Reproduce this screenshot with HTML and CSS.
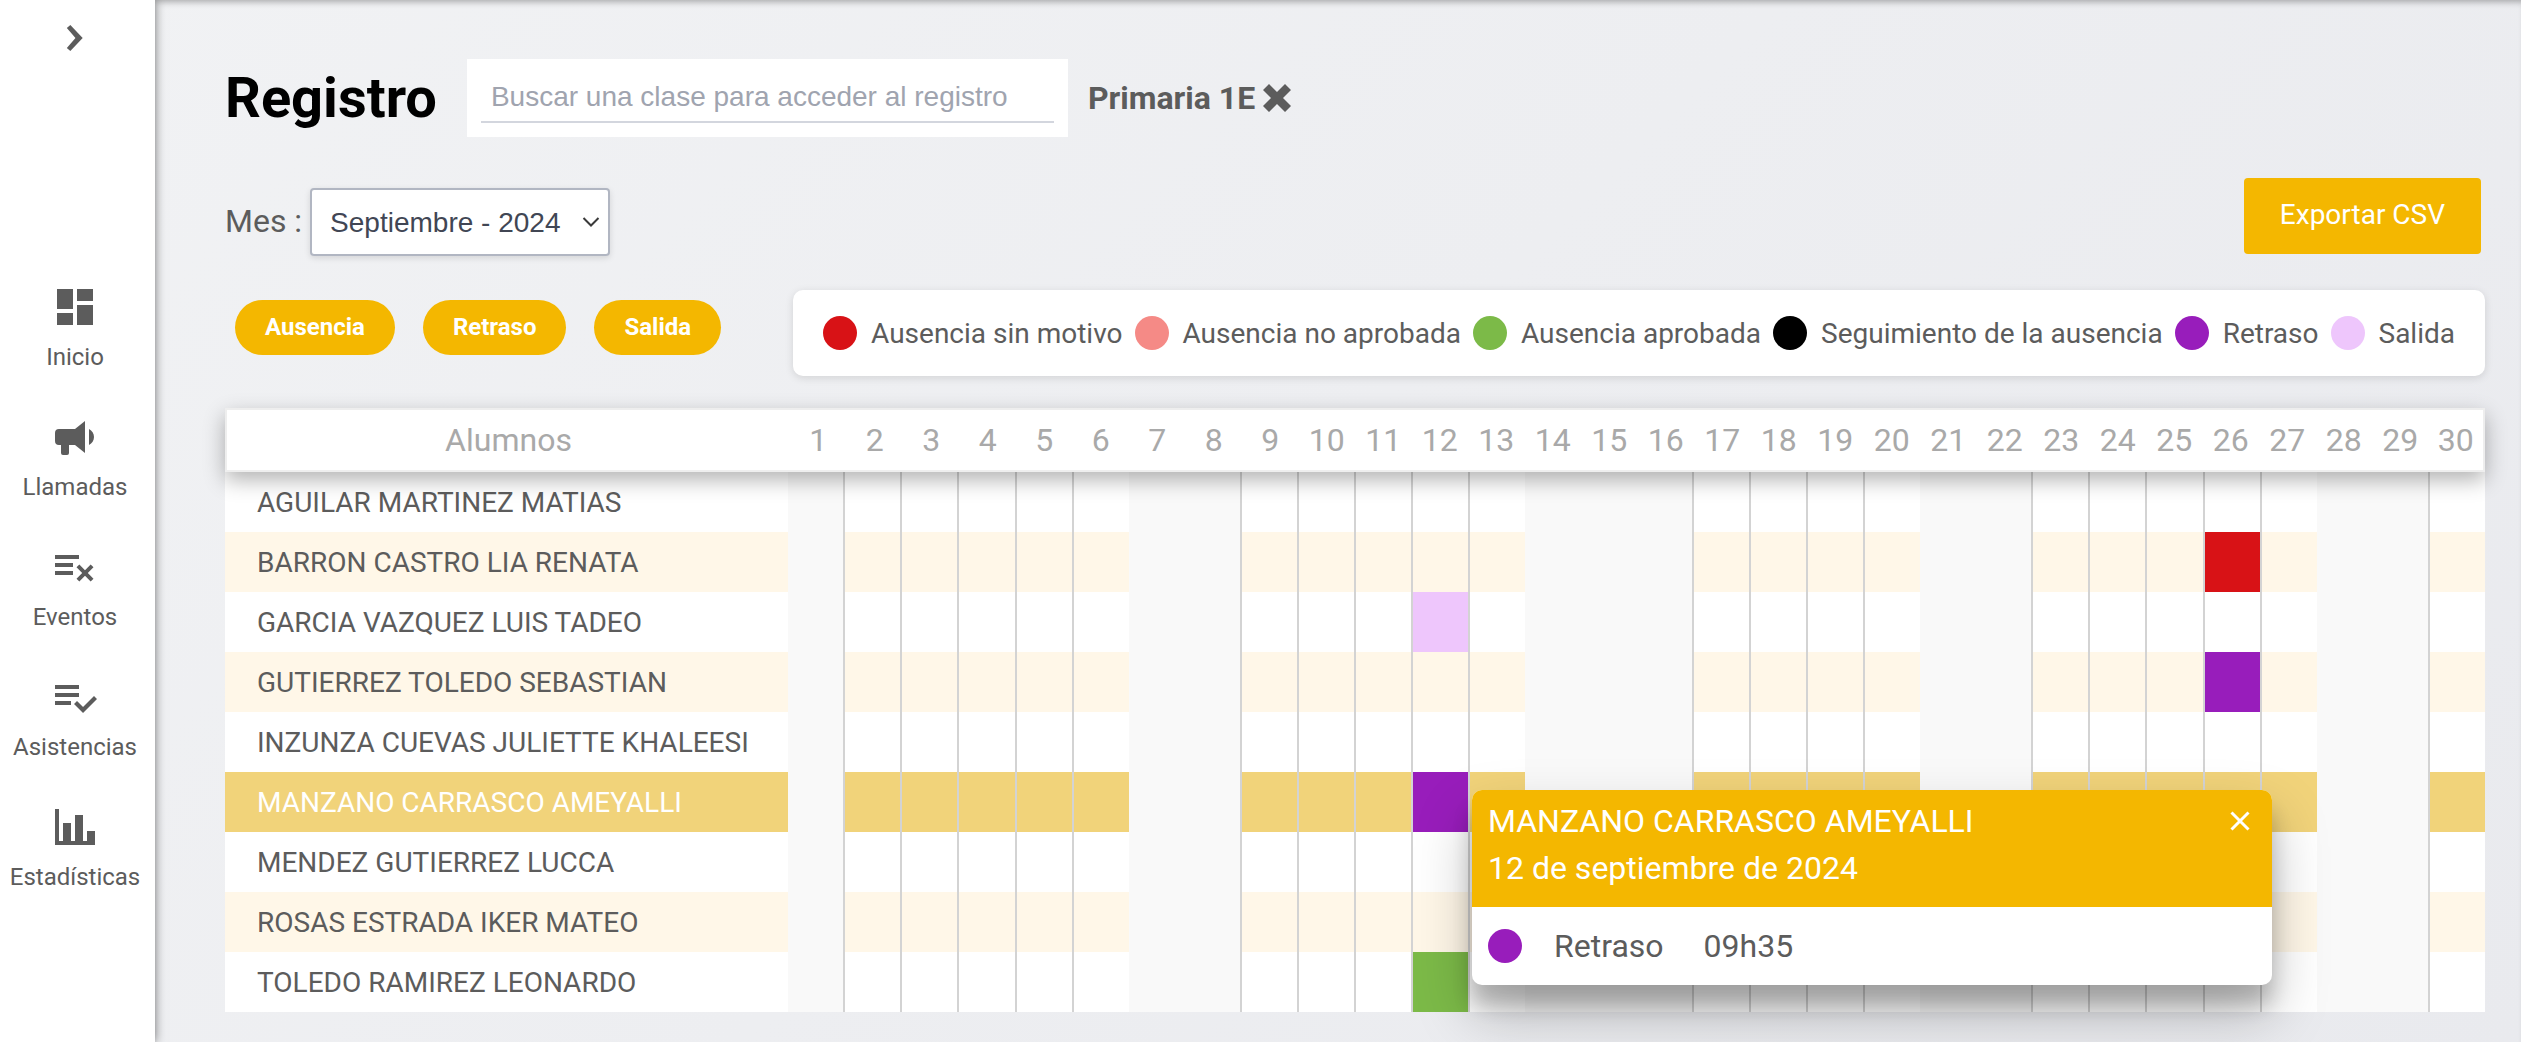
FILE: index.html
```html
<!DOCTYPE html>
<html lang="es">
<head>
  <meta charset="UTF-8">
  <meta name="viewport" content="width=device-width, initial-scale=1.0">
  <title>Registro</title>
  <link rel="stylesheet" href="styles.css">
</head>
<body>
  <nav class="sidebar">
    <button class="sidebar-toggle" type="button" aria-label="Abrir menú">
      <svg viewBox="0 0 24 24"><path d="M5 3.400 12.400 12 5 20.600 8 23.200 18.600 12 8 .8z"/></svg>
    </button>
    <ul class="menu">
      <li><a class="menu-item" href="#">
        <svg viewBox="0 0 24 24"><path d="M3 13h8V3H3v10zm0 8h8v-6H3v6zm10 0h8V11h-8v10zm0-18v6h8V3h-8z"/></svg>
        <span>Inicio</span>
      </a></li>
      <li><a class="menu-item" href="#">
        <svg viewBox="0 0 24 24"><path d="M12 8H4a2 2 0 0 0-2 2v4a2 2 0 0 0 2 2h1v4a1 1 0 0 0 1 1h2a1 1 0 0 0 1-1v-4h3l5 4V4l-5 4m9.500 4c0 1.710-.960 3.260-2.500 4V8c1.530.750 2.500 2.300 2.500 4z"/></svg>
        <span>Llamadas</span>
      </a></li>
      <li><a class="menu-item" href="#">
        <svg viewBox="0 0 24 24"><path d="M2 6v2h12V6H2m0 4v2h9v-2H2m12.170.760-1.410 1.410L15.590 15l-2.830 2.830 1.410 1.410L17 16.410l2.830 2.830 1.410-1.410L18.410 15l2.830-2.830-1.410-1.410L17 13.590l-2.830-2.830M2 14v2h9v-2H2z"/></svg>
        <span>Eventos</span>
      </a></li>
      <li><a class="menu-item" href="#">
        <svg viewBox="0 0 24 24"><path d="M14 10H2v2h12v-2m0-4H2v2h12V6M2 16h8v-2H2v2m19.500-4.500L23 13l-6.990 7-4.510-4.500L13 14l3.010 3 5.490-5.500z"/></svg>
        <span>Asistencias</span>
      </a></li>
      <li><a class="menu-item" href="#">
        <svg viewBox="0 0 24 24"><path d="M22 21H2V3h2v16h2v-9h4v9h2V6h4v13h2v-5h4v7z"/></svg>
        <span>Estadísticas</span>
      </a></li>
    </ul>
  </nav>

  <main class="content">
    <header class="title-bar">
      <h1>Registro</h1>
      <div class="search">
        <input type="text" placeholder="Buscar una clase para acceder al registro" aria-label="Buscar una clase">
      </div>
      <div class="class-tag">
        <span>Primaria 1E</span>
        <button type="button" aria-label="Quitar clase">
          <svg viewBox="0 0 28 28"><path d="M6 0 14 8 22 0 28 6 20 14 28 22 22 28 14 20 6 28 0 22 8 14 0 6z"/></svg>
        </button>
      </div>
    </header>

    <div class="toolbar">
      <div class="month">
        <label for="month">Mes :</label>
        <div class="select-wrap">
          <select id="month">
            <option>Septiembre - 2024</option>
          </select>
          <svg viewBox="0 0 18 12"><path d="M1.500 2 9 9.500 16.500 2"/></svg>
        </div>
      </div>
      <button class="export" type="button">Exportar CSV</button>
    </div>

    <div class="filters">
      <div class="pills">
        <button class="pill" type="button">Ausencia</button>
        <button class="pill" type="button">Retraso</button>
        <button class="pill" type="button">Salida</button>
      </div>
      <ul class="legend">
        <li><span class="dot unjustified"></span>Ausencia sin motivo</li>
        <li><span class="dot rejected"></span>Ausencia no aprobada</li>
        <li><span class="dot approved"></span>Ausencia aprobada</li>
        <li><span class="dot tracking"></span>Seguimiento de la ausencia</li>
        <li><span class="dot late"></span>Retraso</li>
        <li><span class="dot exit"></span>Salida</li>
      </ul>
    </div>

    <div class="register">
      <table>
        <thead>
          <tr id="days"></tr>
        </thead>
        <tbody id="students"></tbody>
      </table>
      <div class="popup" role="dialog" aria-labelledby="popupName">
        <div class="popup-header">
          <div>
            <div id="popupName">MANZANO CARRASCO AMEYALLI</div>
            <div>12 de septiembre de 2024</div>
          </div>
          <button type="button" aria-label="Cerrar">
            <svg viewBox="0 0 20 20"><path d="M1.500 1.500l17 17M18.500 1.500l-17 17"/></svg>
          </button>
        </div>
        <div class="popup-body">
          <span class="dot late"></span>
          <span>Retraso</span>
          <span>09h35</span>
        </div>
      </div>
    </div>
  </main>
  <script src="register.js"></script>
</body>
</html>
```
FILE: styles.css
```css
* {
  box-sizing: border-box;
}
body {
  margin: 0;
  display: flex;
  min-height: 100vh;
  font-family: Roboto, sans-serif;
  font-size: 28px;
  color: #5c5c5c;
  background: linear-gradient(135deg, #f1f2f4, #e9eaee);
}
button {
  border: none;
  font-family: inherit;
  font-size: inherit;
  cursor: pointer;
}
input, select {
  font-family: "Liberation Sans", Arial, sans-serif;
  font-size: 28px;
}
ul {
  list-style: none;
  margin: 0;
  padding: 0;
}
svg {
  display: block;
  fill: currentColor;
}

/* sidebar */
.sidebar {
  flex: none;
  width: 155px;
  padding-right: 5px;
  background: #fff;
  box-shadow: 0 0 10px rgba(0,0,0,0.5);
  z-index: 1;
}
.sidebar-toggle {
  display: block;
  margin: 24px auto 0;
  padding: 0;
  background: none;
  color: #5c5c5c;
}
.sidebar-toggle svg {
  width: 28px;
  height: 28px;
}
.menu {
  margin-top: 231px;
}
.menu-item {
  display: flex;
  flex-direction: column;
  align-items: center;
  height: 130px;
  font-size: 24px;
  line-height: 28px;
  color: #5c5c5c;
  text-decoration: none;
}
.menu-item svg {
  width: 48px;
  height: 48px;
  margin-bottom: 12px;
}

/* content */
.content {
  flex: 1;
  min-width: 0;
  padding: 59px 36px 30px 70px;
  box-shadow: inset 0 6px 6px -4px rgba(0,0,0,0.3);
}
.title-bar {
  display: flex;
  align-items: center;
}
h1 {
  margin: 0 30px 0 0;
  font-size: 56px;
  line-height: 64px;
  font-weight: 700;
  color: #000;
}
.search {
  width: 601px;
  height: 78px;
  padding: 12px 14px;
  background: #fff;
}
.search input {
  width: 100%;
  height: 52px;
  padding: 2px 10px 0;
  border: none;
  border-bottom: 2px solid #d3d6de;
  background: none;
  color: #5c5c5c;
}
.search input::placeholder {
  color: #a0a4af;
}
.class-tag {
  display: flex;
  align-items: center;
  gap: 8px;
  margin-left: 20px;
  font-size: 32px;
  font-weight: 700;
}
.class-tag button {
  padding: 0;
  background: none;
  color: #5c5c5c;
}
.class-tag svg {
  width: 28px;
  height: 28px;
}
.toolbar {
  display: flex;
  justify-content: space-between;
  align-items: flex-start;
  margin-top: 41px;
  padding-right: 4px;
}
.month {
  display: flex;
  align-items: center;
  gap: 8px;
  margin-top: 10px;
  font-size: 32px;
}
.month label {
  padding-bottom: 2px;
}
.select-wrap {
  position: relative;
}
.select-wrap select {
  appearance: none;
  display: block;
  width: 300px;
  height: 68px;
  padding: 0 36px 0 18px;
  border: 2px solid #b1b6c2;
  border-radius: 4px;
  background: #fff;
  color: #414654;
  box-shadow: 0 2px 6px rgba(0,0,0,0.12);
}
.select-wrap svg {
  position: absolute;
  right: 10px;
  top: 28px;
  width: 18px;
  height: 12px;
  fill: none;
  stroke: #3a3a3a;
  stroke-width: 2;
  pointer-events: none;
}
.export {
  height: 76px;
  padding: 0 36px 4px;
  border-radius: 4px;
  background: #f4b700;
  color: #fff;
}

/* filters and legend */
.filters {
  display: flex;
  justify-content: space-between;
  align-items: flex-start;
  margin-top: 34px;
}
.pills {
  display: flex;
  gap: 28px;
  padding: 10px;
}
.pill {
  height: 55px;
  padding: 0 30px 2px;
  border-radius: 28px;
  background: #f4b700;
  color: #fff;
  font-size: 24px;
  font-weight: 700;
}
.legend {
  display: flex;
  align-items: center;
  gap: 12px;
  height: 86px;
  padding: 0 30px;
  border-radius: 10px;
  background: #fff;
  box-shadow: 0 2px 8px rgba(0,0,0,0.12);
}
.legend li {
  display: flex;
  align-items: center;
  gap: 14px;
}
.dot {
  width: 34px;
  height: 34px;
  border-radius: 50%;
}
.unjustified {
  background: #d81216;
}
.rejected {
  background: #f58a86;
}
.approved {
  background: #7cba48;
}
.tracking {
  background: #000;
}
.late {
  background: #981dbb;
}
.exit {
  background: #eec6fc;
}

/* register */
.register {
  position: relative;
  margin-top: 32px;
}
table {
  display: block;
}
/* the head keeps equal day columns, the body makes days off narrower */
thead, tbody {
  display: table;
  width: 100%;
  table-layout: fixed;
  border-spacing: 0;
}
th, td {
  padding: 0;
}
thead {
  position: relative;
  box-shadow: 0 8px 20px rgba(0,0,0,0.3);
}
thead th {
  height: 64px;
  border: solid #eee;
  border-width: 2px 0;
  background: #fff;
  color: #a9a9a9;
  font-size: 32px;
  font-weight: 400;
}
thead th:first-child {
  width: 25%;
  border-left-width: 2px;
}
thead th:last-child {
  border-right-width: 2px;
}
tbody th {
  width: 24.9%;
  height: 60px;
  padding-left: 32px;
  font-weight: 400;
  text-align: left;
  white-space: nowrap;
}
tbody tr {
  background: #fff;
}
tbody tr:nth-child(even) {
  background: #fff7e8;
}
tbody tr.selected {
  background: #f1d37a;
  color: #fff;
}
td {
  border-left: 2px solid #d3d3d3;
  background-clip: padding-box;
}
td.off {
  width: 2.46%;
  border-left: none;
  background: #f9f9f9;
}

.popup {
  position: absolute;
  left: 1247px;
  top: 382px;
  width: 800px;
  border-radius: 10px;
  background: #fff;
  font-size: 32px;
  line-height: 47px;
  box-shadow: 0 28px 56px rgba(0,0,0,0.25), 0 20px 20px rgba(0,0,0,0.2);
  overflow: hidden;
}
.popup-header {
  display: flex;
  justify-content: space-between;
  align-items: flex-start;
  padding: 8px 22px 15px 16px;
  background: #f4b700;
  color: #fff;
}
.popup-header button {
  margin-top: 13px;
  padding: 0;
  background: none;
  color: #fff;
}
.popup-header svg {
  width: 20px;
  height: 20px;
  stroke: currentColor;
  stroke-width: 3;
}
.popup-body {
  display: flex;
  align-items: center;
  height: 78px;
  padding-left: 16px;
}
.popup-body .dot {
  margin-right: 32px;
}
.popup-body span + span + span {
  margin-left: 40px;
}
```
FILE: register.js
```javascript
var daysInMonth = 30;
var daysOff = [1, 7, 8, 14, 15, 16, 21, 22, 28, 29];
var students = [
  { name: 'AGUILAR MARTINEZ MATIAS', marks: {} },
  { name: 'BARRON CASTRO LIA RENATA', marks: { 26: 'unjustified' } },
  { name: 'GARCIA VAZQUEZ LUIS TADEO', marks: { 12: 'exit' } },
  { name: 'GUTIERREZ TOLEDO SEBASTIAN', marks: { 26: 'late' } },
  { name: 'INZUNZA CUEVAS JULIETTE KHALEESI', marks: {} },
  { name: 'MANZANO CARRASCO AMEYALLI', marks: { 12: 'late' }, selected: true },
  { name: 'MENDEZ GUTIERREZ LUCCA', marks: {} },
  { name: 'ROSAS ESTRADA IKER MATEO', marks: {} },
  { name: 'TOLEDO RAMIREZ LEONARDO', marks: { 12: 'approved' } }
];

var head = '<th scope="col">Alumnos</th>';
for (var d = 1; d <= daysInMonth; d++) {
  head += '<th scope="col">' + d + '</th>';
}
document.getElementById('days').innerHTML = head;

document.getElementById('students').innerHTML = students.map(function (s) {
  var row = '<tr' + (s.selected ? ' class="selected"' : '') + '><th scope="row">' + s.name + '</th>';
  for (var d = 1; d <= daysInMonth; d++) {
    row += '<td class="' + (daysOff.includes(d) ? 'off' : (s.marks[d] || '')) + '"></td>';
  }
  return row + '</tr>';
}).join('');
```
